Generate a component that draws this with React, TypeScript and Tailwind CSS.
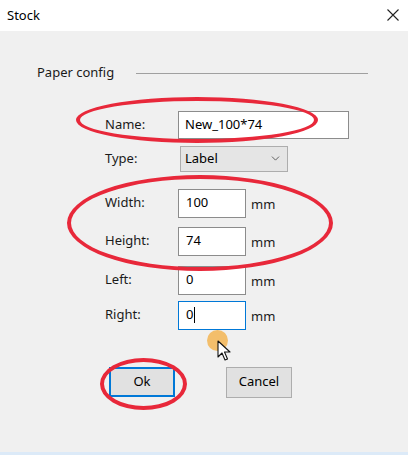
import { ChevronDown } from 'lucide-react';

const font = { fontFamily: '"Noto Sans", "Open Sans", sans-serif' };

function Field({ label, value, top, focused }: { label: string; value: string; top: string; focused?: boolean }) {
  return (
    <div className={`flex items-center ${top}`}>
      <span className="w-[73px] text-[13px] text-[#1a1a1a]">{label}</span>
      <div
        className={`w-[68px] h-[29px] bg-white flex items-center pl-[7px] text-[13px] text-black border ${
          focused ? 'border-[#0078d7]' : 'border-[#8c8c8c]'
        }`}
      >
        {value}
        {focused && <span className="ml-[1px] w-[1px] h-[16px] bg-black" />}
      </div>
      <span className="ml-[5px] mt-[4px] text-[13px] text-[#1a1a1a]">mm</span>
    </div>
  );
}

export default function App() {
  return (
    <div className="relative w-[408px] h-[455px] bg-[#f0f0f0] overflow-hidden flex flex-col" style={font}>
      {/* title bar */}
      <div className="h-[31px] bg-white flex items-center justify-between pl-[7px] pr-[9px] shrink-0">
        <span className="text-[13px] text-black">Stock</span>
        <svg width="12" height="12" viewBox="0 0 12 12" className="mt-[-2px]">
          <path d="M0.5 0.5 L11.5 11.5 M11.5 0.5 L0.5 11.5" stroke="#222" strokeWidth="1.1" />
        </svg>
      </div>

      {/* group header */}
      <div className="flex items-center mt-[32px] pl-[37px] pr-[40px]">
        <span className="text-[13px] text-[#1a1a1a]">Paper config</span>
        <div className="flex-1 ml-[22px] h-[2px] border-t border-[#a0a0a0] mt-[2px]" />
      </div>

      <div className="pl-[105px] flex flex-col">
        {/* Name */}
        <div className="flex items-center mt-[28px]">
          <span className="w-[73px] text-[13px] text-[#1a1a1a]">Name:</span>
          <div className="w-[171px] h-[28px] bg-white border border-[#8c8c8c] flex items-center pl-[6px] text-[13px] text-black">
            New_100*74
          </div>
        </div>
        {/* Type */}
        <div className="flex items-center mt-[7px]">
          <span className="w-[75px] text-[13px] text-[#1a1a1a]">Type:</span>
          <div className="w-[108px] h-[26px] bg-[#e5e5e5] border border-[#adadad] flex items-center justify-between pl-[4px] pr-[5px] text-[13px] text-black">
            Label
            <ChevronDown size={13} strokeWidth={1.5} color="#444" />
          </div>
        </div>
        <Field label="Width:" value="100" top="mt-[17px]" />
        <Field label="Height:" value="74" top="mt-[9px]" />
        <Field label="Left:" value="0" top="mt-[10px]" />
        <Field label="Right:" value="0" top="mt-[6px]" focused />
      </div>

      {/* buttons */}
      <div className="flex mt-[37px] pl-[109px] gap-[51px]">
        <button className="w-[66px] h-[30px] bg-[#e1e1e1] border-2 border-[#0078d7] text-[13px] text-black">Ok</button>
        <button className="w-[66px] h-[31px] bg-[#e1e1e1] border border-[#adadad] text-[13px] text-black">Cancel</button>
      </div>

      <div className="mt-auto h-[3px] bg-[#dceaf8]" />

      {/* annotations */}
      <div className="absolute left-[76px] top-[97px] w-[242px] h-[46px] rounded-[50%] border-[4px] border-[#e8283a]" />
      <div className="absolute left-[67px] top-[175px] w-[266px] h-[96px] rounded-[50%] border-[4px] border-[#e8283a]" />
      <div className="absolute left-[100px] top-[358px] w-[87px] h-[52px] rounded-[50%] border-[4px] border-[#e8283a]" />

      {/* mouse */}
      <div className="absolute left-[207px] top-[330px] w-[21px] h-[21px] rounded-full bg-[#f3b85c] opacity-90" />
      <svg className="absolute left-[217px] top-[340px]" width="14" height="22" viewBox="0 0 14 22">
        <path d="M1 1 L1 17 L5 13 L8 20 L10.5 19 L7.5 12 L13 12 Z" fill="white" stroke="#111" strokeWidth="1.1" strokeLinejoin="round" />
      </svg>
    </div>
  );
}
